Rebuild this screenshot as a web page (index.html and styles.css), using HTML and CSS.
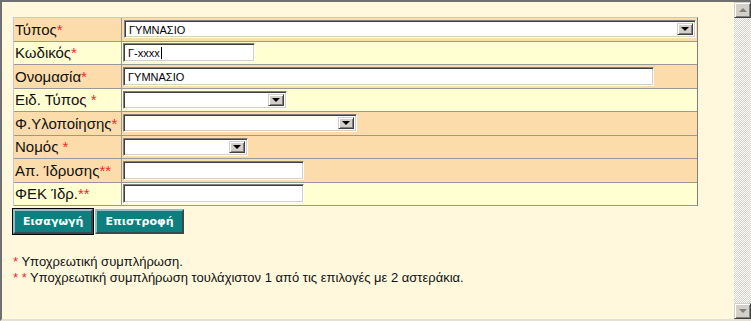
FILE: index.html
```html
<!DOCTYPE html>
<html lang="el">
<head>
    <meta charset="UTF-8">
    <title>Σχολική Μονάδα</title>
    <link rel="stylesheet" href="styles.css">
</head>
<body>
    <div class="frame">
        <div class="content">
            <table class="form">
                <tr class="odd">
                    <td class="label">Τύπος<span class="req">*</span></td>
                    <td class="field">
                        <div class="select w-typos"><span class="value">ΓΥΜΝΑΣΙΟ</span><span class="arrow"><i></i></span></div>
                    </td>
                </tr>
                <tr class="even">
                    <td class="label">Κωδικός<span class="req">*</span></td>
                    <td class="field">
                        <div class="input w-kod">Γ-xxxx<span class="caret"></span></div>
                    </td>
                </tr>
                <tr class="odd">
                    <td class="label">Ονομασία<span class="req">*</span></td>
                    <td class="field">
                        <div class="input w-onom">ΓΥΜΝΑΣΙΟ</div>
                    </td>
                </tr>
                <tr class="even">
                    <td class="label">Ειδ. Τύπος <span class="req">*</span></td>
                    <td class="field">
                        <div class="select w-eid"><span class="value"></span><span class="arrow"><i></i></span></div>
                    </td>
                </tr>
                <tr class="odd">
                    <td class="label">Φ.Υλοποίησης<span class="req">*</span></td>
                    <td class="field">
                        <div class="select w-fyl"><span class="value"></span><span class="arrow"><i></i></span></div>
                    </td>
                </tr>
                <tr class="odd">
                    <td class="label">Νομός <span class="req">*</span></td>
                    <td class="field">
                        <div class="select w-nomos"><span class="value"></span><span class="arrow"><i></i></span></div>
                    </td>
                </tr>
                <tr class="odd">
                    <td class="label">Απ. Ίδρυσης<span class="req">**</span></td>
                    <td class="field">
                        <div class="input w-short"></div>
                    </td>
                </tr>
                <tr class="even">
                    <td class="label">ΦΕΚ Ίδρ.<span class="req">**</span></td>
                    <td class="field">
                        <div class="input w-short"></div>
                    </td>
                </tr>
            </table>

            <div class="buttons">
                <button class="btn default">Εισαγωγή</button>
                <button class="btn">Επιστροφή</button>
            </div>

            <div class="notes">
                <p><span class="req">*</span> Υποχρεωτική συμπλήρωση.</p>
                <p><span class="req">* *</span> Υποχρεωτική συμπλήρωση τουλάχιστον 1 από τις επιλογές με 2 αστεράκια.</p>
            </div>
        </div>

        <div class="scrollbar">
            <span class="sb-btn"><i class="up"></i></span>
            <span class="sb-track"></span>
            <span class="sb-btn"><i class="down"></i></span>
        </div>
    </div>
</body>
</html>
```

FILE: styles.css
```css
body {
    margin: 0;
    font-family: "Liberation Sans", Arial, sans-serif;
    background: #fff8dc;
}

.frame {
    display: flex;
    width: 751px;
    height: 321px;
    box-sizing: border-box;
    border-top: 2px solid #707070;
    border-left: 2px solid #707070;
    border-bottom: 2px solid #e4e0d8;
    background: #fff8dc;
}

.content {
    flex: 1;
    padding: 15px 0 0 11px;
}

.form {
    border-collapse: separate;
    border-spacing: 0;
    width: 685px;
    border-top: 1px solid #c8c8c8;
    border-left: 1px solid #c8c8c8;
    border-right: 1px solid #808080;
}

.form tr {
    height: 23.5px;
}

.form td {
    border-bottom: 1px solid #999999;
    padding: 0 1px;
    vertical-align: middle;
}

.form tr.odd td {
    background: #fddcab;
}

.form tr.even td {
    background: #ffffd2;
}

.label {
    width: 105px;
    font-size: 15px;
    color: #111;
    border-right: 1px solid #999999;
    white-space: nowrap;
}

.req {
    color: #ee2a2a;
}

.field {
    font-size: 11px;
}

.input,
.select {
    box-sizing: border-box;
    height: 19px;
    background: #fff;
    border: 1px solid;
    border-color: #808080 #ffffff #ffffff #808080;
    box-shadow: inset 1px 1px 0 #404040, inset -1px -1px 0 #d4d0c8;
    font-size: 11px;
    color: #000;
}

.input {
    padding: 3px 4px 0;
    line-height: 13px;
}

.select {
    display: flex;
    height: 18px;
    padding: 2px;
}

.select .value {
    flex: 1;
    padding-left: 2px;
    line-height: 14px;
}

.arrow {
    display: flex;
    align-items: center;
    justify-content: center;
    width: 16px;
    box-sizing: border-box;
    background: #d4d0c8;
    border: 1px solid;
    border-color: #d4d0c8 #404040 #404040 #d4d0c8;
    box-shadow: inset 1px 1px 0 #fff, inset -1px -1px 0 #808080;
}

.arrow i {
    width: 0;
    height: 0;
    border-left: 4px solid transparent;
    border-right: 4px solid transparent;
    border-top: 4px solid #000;
}

.caret {
    display: inline-block;
    width: 1px;
    height: 12px;
    margin-left: 1px;
    vertical-align: -2px;
    background: #000;
}

.w-typos { width: 572px; margin-left: 1px; }
.w-kod { width: 132px; }
.w-onom { width: 531px; }
.w-eid { width: 164px; }
.w-fyl { width: 234px; }
.w-nomos { width: 125px; }
.w-short { width: 181px; }

.buttons {
    display: flex;
    gap: 2px;
    margin-top: 3px;
}

.btn {
    height: 25px;
    padding: 0 8px;
    background: #0e7f7f;
    color: #fff;
    font-family: "DejaVu Sans", Verdana, sans-serif;
    font-size: 11px;
    font-weight: bold;
    border: 2px solid;
    border-color: #8fc0c0 #3a4a4a #3a4a4a #8fc0c0;
}

.btn.default {
    outline: 1px solid #000;
    outline-offset: 0;
    width: 80px;
}

.btn + .btn {
    width: 89px;
}

.notes {
    margin-top: 20px;
    font-size: 13px;
    color: #111;
}

.notes p {
    margin: 0;
    line-height: 16px;
}

.scrollbar {
    display: flex;
    flex-direction: column;
    width: 17px;
}

.sb-track {
    flex: 1;
    background: repeating-conic-gradient(#d4d0c8 0 25%, #ffffff 0 50%) 0 0 / 2px 2px;
}

.sb-btn {
    display: flex;
    align-items: center;
    justify-content: center;
    height: 16px;
    box-sizing: border-box;
    background: #d4d0c8;
    border: 1px solid;
    border-color: #d4d0c8 #404040 #404040 #d4d0c8;
    box-shadow: inset 1px 1px 0 #fff, inset -1px -1px 0 #808080;
}

.sb-btn i {
    width: 0;
    height: 0;
    border-left: 4px solid transparent;
    border-right: 4px solid transparent;
}

.sb-btn .up {
    border-bottom: 4px solid #808080;
}

.sb-btn .down {
    border-top: 4px solid #808080;
}
```
